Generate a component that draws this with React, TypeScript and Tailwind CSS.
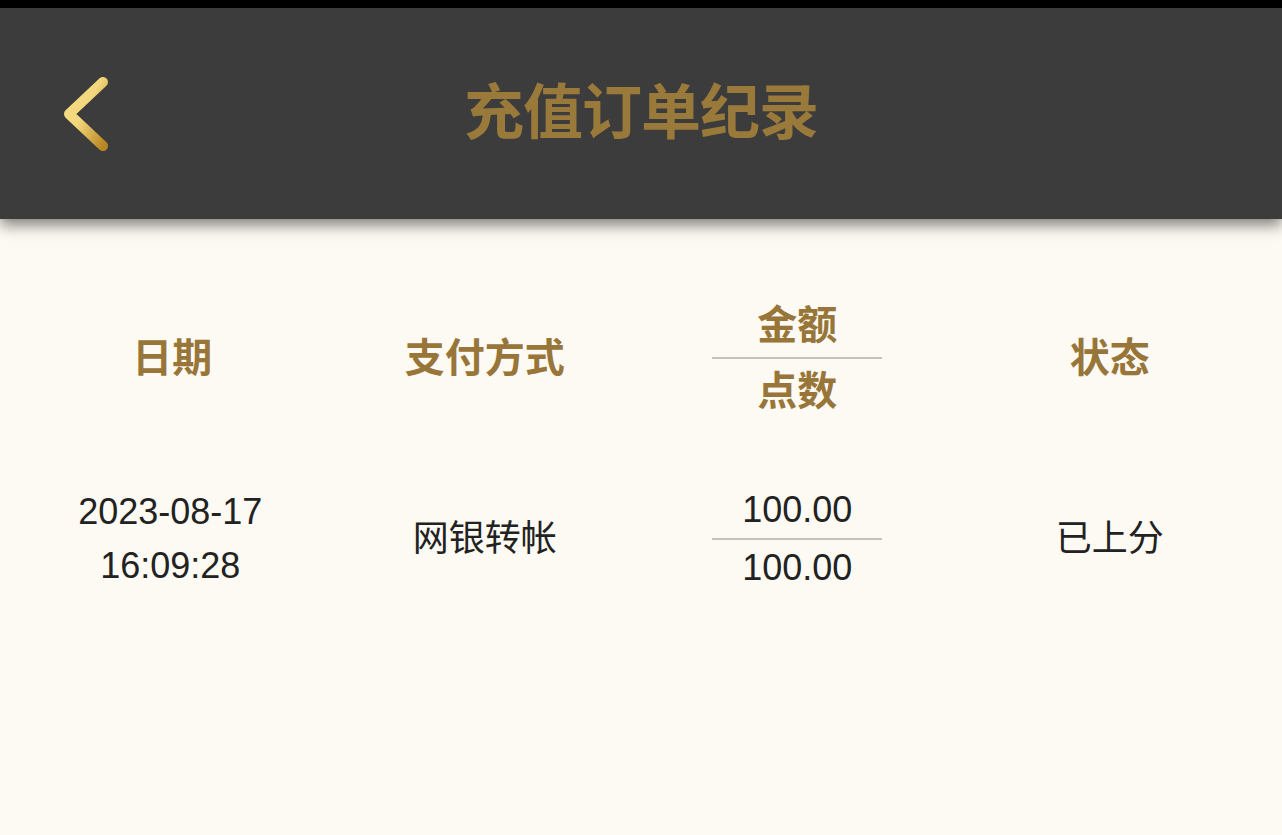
import React from 'react';

const font = { fontFamily: '"Liberation Sans", "Noto Sans CJK SC", sans-serif' };

function BackIcon() {
  return (
    <svg width="56" height="100" viewBox="0 0 56 100" className="block">
      <defs>
        <linearGradient id="gold" x1="0" y1="0" x2="1" y2="1">
          <stop offset="0%" stopColor="#f6dc86" />
          <stop offset="45%" stopColor="#f3d77c" />
          <stop offset="100%" stopColor="#b98722" />
        </linearGradient>
      </defs>
      <polyline
        points="43,21 9,53 43,85"
        fill="none"
        stroke="url(#gold)"
        strokeWidth="10"
        strokeLinecap="round"
        strokeLinejoin="round"
      />
    </svg>
  );
}

function Split({ top, bottom, lh }: { top: string; bottom: string; lh: string }) {
  return (
    <div className="flex flex-col items-center">
      <div className={lh}>{top}</div>
      <div className="w-[170px] h-[2px] bg-[#c4c2bd]" />
      <div className={lh}>{bottom}</div>
    </div>
  );
}

export default function App() {
  return (
    <div className="w-full min-h-[835px] bg-[#fdfaf3] flex flex-col" style={font}>
      <div className="h-2 bg-black" />
      <header className="relative z-10 h-[211px] bg-[#3c3c3c] flex items-center shadow-[0_6px_14px_rgba(0,0,0,0.5)]">
        <div className="absolute left-[60px] top-[53px]">
          <BackIcon />
        </div>
        <h1 className="flex-1 text-center text-[60px] font-bold text-[#9a7a3a] tracking-[-1px]">充值订单纪录</h1>
      </header>

      <div className="px-4 pt-[74px]">
        <div className="grid grid-cols-4 items-center text-[40px] font-bold text-[#98763a]">
          <div className="text-center">日期</div>
          <div className="text-center">支付方式</div>
          <Split top="金额" bottom="点数" lh="leading-[64px]" />
          <div className="text-center">状态</div>
        </div>

        <div className="grid grid-cols-4 items-center text-[36px] text-[#222222] mt-[59px]">
          <div className="text-center leading-[54px] -translate-x-[2px]">
            <div>2023-08-17</div>
            <div>16:09:28</div>
          </div>
          <div className="text-center">网银转帐</div>
          <Split top="100.00" bottom="100.00" lh="leading-[56px]" />
          <div className="text-center">已上分</div>
        </div>
      </div>
    </div>
  );
}
